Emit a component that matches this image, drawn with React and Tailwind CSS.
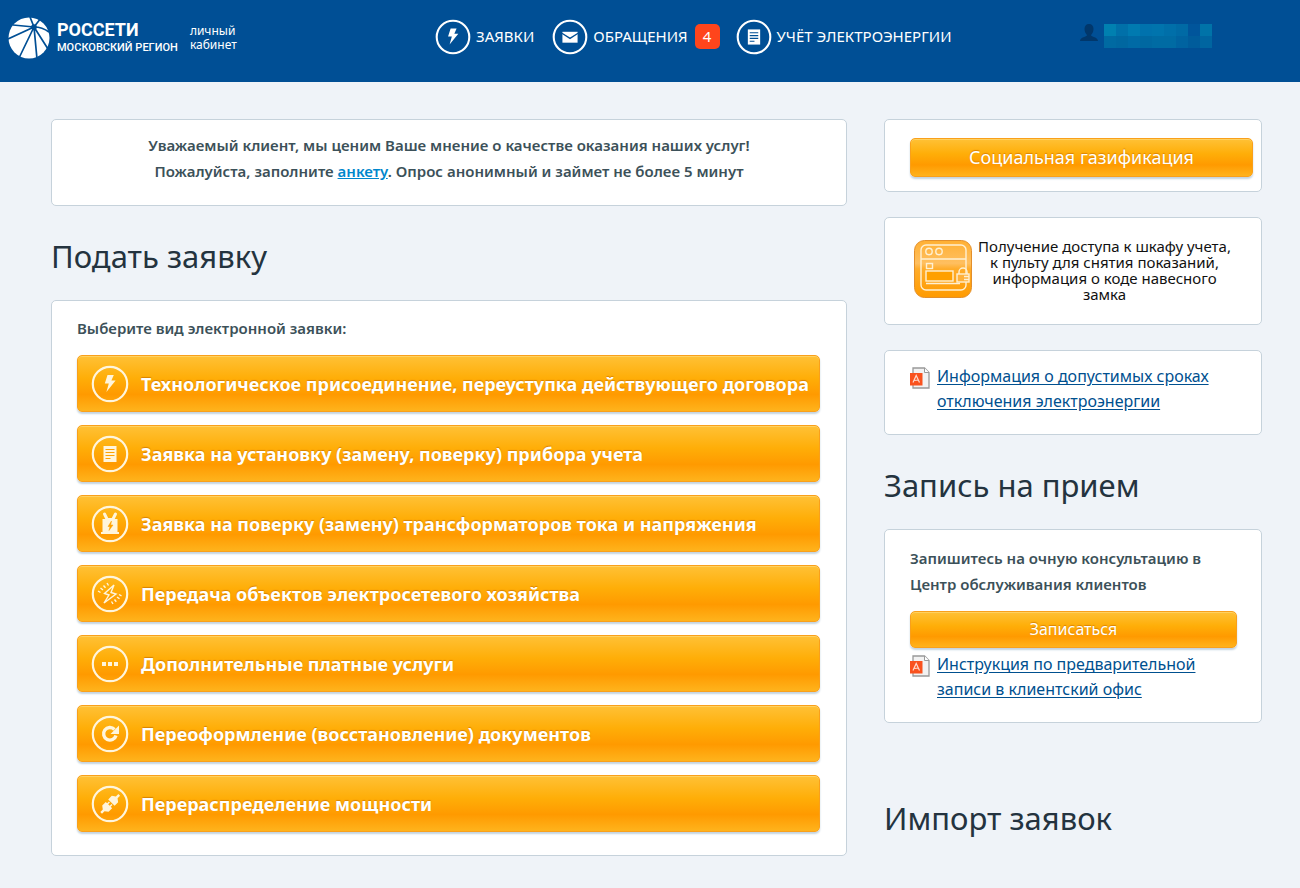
import React from 'react';

const requestTypes = [
    { id: 1, icon: 'bolt', title: 'Технологическое присоединение, переуступка действующего договора' },
    { id: 2, icon: 'sheet', title: 'Заявка на установку (замену, поверку) прибора учета' },
    { id: 3, icon: 'transformer', title: 'Заявка на поверку (замену) трансформаторов тока и напряжения' },
    { id: 4, icon: 'spark', title: 'Передача объектов электросетевого хозяйства' },
    { id: 5, icon: 'dots', title: 'Дополнительные платные услуги' },
    { id: 6, icon: 'refresh', title: 'Переоформление (восстановление) документов' },
    { id: 7, icon: 'plug', title: 'Перераспределение мощности' }
];

const glyphs = {
    bolt: <path d="M16.5 10h6.3l-2.4 5.6h4.2L15.4 27l2.4-8.4h-4z" fill="currentColor" />,
    mail: (
        <>
            <path d="M11 13.5h16V25H11z" fill="currentColor" />
            <path d="M10.5 15l8.5 5.5 8.5-5.5" fill="none" stroke="#004f95" strokeWidth="1.4" />
        </>
    ),
    sheet: (
        <>
            <path d="M12.5 11h13v16h-13z" fill="currentColor" />
            <path d="M14.5 14.5h9M14.5 17.5h9M14.5 20.5h9M14.5 23.5h5" stroke="var(--hole)" strokeWidth="1.2" />
        </>
    ),
    transformer: (
        <>
            <path d="M13.5 9l2.5 5M24.5 9L22 14" stroke="currentColor" strokeWidth="3" strokeLinecap="round" />
            <path d="M11.5 14H16l1-1h4l1 1h4.5v13H28v2H10v-2h1.5z" fill="currentColor" />
            <path d="M20.5 16L17 21.5h2l-1 4 4-5.5h-2.3z" fill="var(--hole)" stroke="var(--hole)" strokeWidth=".5" />
        </>
    ),
    spark: (
        <g fill="none" stroke="currentColor" strokeWidth="1.4">
            <path d="M23 10l-9.5 8.5L18 20l-5 8 12-9-5-1.5z" />
            <path d="M7 16l2.5 1.5M9.5 13l2.5 2M12.5 10.5l2 2.3M16 8l1.5 2.5" />
            <path d="M20.5 26.5L22 29M23.5 24.500l1.800 2.300M26 22l2.500 1.800M28 19.500l2.500 1.300" />
        </g>
    ),
    dots: <path d="M11 17h4v4h-4zM17 17h4v4h-4zM23 17h4v4h-4z" fill="currentColor" />,
    refresh: (
        <>
            <path d="M23.5 14.5a6.3 6.3 0 1 0 1.5 6" fill="none" stroke="currentColor" strokeWidth="3.4" />
            <path d="M28 10.5V19h-8.5z" fill="currentColor" />
        </>
    ),
    plug: (
        <g fill="currentColor" transform="rotate(-45 19 19)">
            <path d="M6.5 17.8H10l2.5-3.3h5v2H20v1.4h-2.5v2.200H20v1.400h-2.500v2h-5L10 20.200H6.500z" />
            <path d="M32 17.8h-3.5L26 14.5h-5v9h5l2.5-3.300H32z" />
        </g>
    )
};

function RoundIcon({ name, className }) {
    return (
        <svg viewBox="0 0 38 38" className={className} aria-hidden="true">
            <circle cx="19" cy="19" r="17.2" fill="none" stroke="currentColor" strokeWidth="2.2" />
            {glyphs[name]}
        </svg>
    );
}

function Logo() {
    return (
        <svg viewBox="0 0 42 42" className="h-[42px] w-[42px] shrink-0" aria-hidden="true">
            <circle cx="21" cy="21" r="20.5" fill="#fff" />
            <g stroke="#004f95" strokeWidth="1.7" fill="none">
                <path d="M26 10L5 8M26 10L0 22M26 10L11 41M26 10l3 32M26 10l14 22M26 10L22 0M26 10l7-9" />
                <path d="M26 10c6 0 11 2 15 5" />
                <circle cx="26" cy="10" r="2" fill="#004f95" />
            </g>
        </svg>
    );
}

function PdfIcon() {
    return (
        <svg viewBox="0 0 20 22" className="h-[22px] w-5 shrink-0" aria-hidden="true">
            <path d="M3 1h11.5L19 5.5V21H3z" fill="#f2f2f2" stroke="#999" strokeWidth="1.3" />
            <path d="M14.5 1v4.5H19" fill="#fff" stroke="#999" />
            <path d="M0 6h12.5v12.5H0z" fill="#f9521e" />
            <path d="M3 15.5l3.2-7 3.3 7M4.500 13.500l4-.5" fill="none" stroke="#ffd9cb" strokeWidth="1.2" />
        </svg>
    );
}

function CabinetIcon() {
    return (
        <svg viewBox="0 0 58 58" className="mt-0.5 h-[58px] w-[58px] shrink-0" aria-hidden="true">
            <defs>
                <linearGradient id="cabinet" x1="0" y1="0" x2="0" y2="1">
                    <stop offset="0" stopColor="#ffb033" />
                    <stop offset=".4" stopColor="#ffbf60" />
                    <stop offset=".5" stopColor="#ffac2a" />
                    <stop offset="1" stopColor="#ff9b00" />
                </linearGradient>
            </defs>
            <rect x=".5" y=".5" width="57" height="57" rx="10" fill="url(#cabinet)" stroke="#e38f2b" />
            <g fill="none" stroke="#fff0d2" strokeWidth="1.4">
                <rect x="7" y="5" width="45" height="45" rx="5" />
                <path d="M7 19h45" />
                <circle cx="15" cy="11.5" r="3.2" />
                <circle cx="25" cy="11.5" r="3.2" />
                <rect x="12.5" y="23.5" width="6" height="5" />
                <rect x="12" y="31" width="27" height="10" fill="#ffa000" />
                <path d="M12 43.5h34" />
                <path d="M45 34v-2a4 4 0 0 1 8 0v2" />
                <rect x="43" y="34" width="12" height="8" fill="#ffb13a" />
                <path d="M50 36.5h5M50 39.5h5" />
            </g>
        </svg>
    );
}

// hidden user name, drawn as rows of blocks
const maskRows = [
    '#0080b0', '#0070a9', '#007ab0', '#0072ad', '#0074ad', '#006fa9', '#006aa5', '#00559b', '#0073a8', '#004f95',
    '#006aa2', '#0067a0', '#006aa5', '#0068a1', '#006ba3', '#006ba3', '#0063a0', '#005c9b', '#0065a0', '#004f95'
];

function User() {
    return (
        <div className="flex pt-6">
            <svg viewBox="0 0 18 18" className="mr-1.5 h-[18px] w-[18px]" aria-hidden="true">
                <path d="M9 0c3 0 4.5 2 4.5 5S12 10 11 11c0 2 7 2 7 6H0c0-4 7-4 7-6C6 10 4.5 8 4.5 5S6 0 9 0z" fill="#01376b" />
            </svg>
            <div className="grid grid-cols-10">
                {maskRows.map((color, idx) => (
                    <span key={idx} className="h-3 w-3" style={{ background: color }} />
                ))}
            </div>
        </div>
    );
}

function Header() {
    return (
        <header className="flex h-[82px] items-start bg-[#004f95] pl-2 pr-[76px] text-white">
            <a href="#" className="flex h-[75px] w-[427px] items-center">
                <Logo />
                <span className="ml-[7px] flex flex-col font-['Roboto',sans-serif] font-bold">
                    <span className="text-lg leading-5">РОССЕТИ</span>
                    <span className="text-[11px] font-medium leading-4">МОСКОВСКИЙ РЕГИОН</span>
                </span>
                <span className="ml-3 text-xs leading-[14px]">личный<br />кабинет</span>
            </a>
            <nav className="flex h-[73px] flex-1 items-center text-[15px]">
                <a href="#" className="flex items-center gap-[5px]">
                    <RoundIcon name="bolt" className="h-9 w-9" />ЗАЯВКИ
                </a>
                <a href="#" className="ml-[18px] flex items-center gap-[5px]">
                    <RoundIcon name="mail" className="h-9 w-9" />ОБРАЩЕНИЯ
                    <span className="ml-0.5 flex h-[25px] w-[25px] items-center justify-center rounded-[5px] bg-[#ff451c]">4</span>
                </a>
                <a href="#" className="ml-4 flex items-center gap-[5px]">
                    <RoundIcon name="sheet" className="h-9 w-9 [--hole:#004f95]" />УЧЁТ ЭЛЕКТРОЭНЕРГИИ
                </a>
            </nav>
            <User />
        </header>
    );
}

function Card({ className, children }) {
    return <section className={`rounded-[5px] border border-[#c6d2db] bg-white ${className}`}>{children}</section>;
}

const heading = 'pb-[21px] pt-[27px] text-[31px] leading-[46px] text-[#24333f]';

const orange =
    'rounded-[5px] border border-[#f9a01b] text-white shadow-[0_2px_2px_#c3d3df,inset_0_1px_0_#ffd160] bg-[linear-gradient(#ffc136,#ffae08_40%,#ff9a00_70%,#ffb31c)] [text-shadow:0_-1px_1px_#d98200] cursor-pointer hover:brightness-105';

function PdfLink({ children }) {
    return (
        <a href="#" className="flex gap-[7px] text-base leading-[25px] text-[#00508f]">
            <span className="pt-[3px]"><PdfIcon /></span>
            <span className="underline underline-offset-2">{children}</span>
        </a>
    );
}

export default function App() {
    return (
        <div className="min-h-screen bg-[#eff3f8] font-['Noto_Sans',sans-serif] text-[#3c5159]">
            <Header />
            <main className="grid grid-cols-[minmax(0,1fr)_378px] gap-[37px] pb-8 pl-[51px] pr-[38px] pt-[37px]">
                <div>
                    <Card className="px-6 pb-[21px] pt-3 text-center text-[15px] font-semibold leading-[26px]">
                        <p>Уважаемый клиент, мы ценим Ваше мнение о качестве оказания наших услуг!</p>
                        <p>
                            Пожалуйста, заполните <a href="#" className="text-[#0087cc] underline">анкету</a>. Опрос анонимный и займет не более 5 минут
                        </p>
                    </Card>
                    <h1 className={heading}>Подать заявку</h1>
                    <Card className="pb-[23px] pl-[25px] pr-[26px] pt-[15px]">
                        <p className="text-[15px] font-semibold leading-6">Выберите вид электронной заявки:</p>
                        <div className="mt-[15px] flex flex-col gap-[13px]">
                            {requestTypes.map((item) => (
                                <button
                                    key={item.id}
                                    className={`${orange} flex h-[57px] items-center gap-3 pl-[13px] text-left text-lg font-bold`}
                                >
                                    <RoundIcon name={item.icon} className="h-[38px] w-[38px] shrink-0 text-[#fff5dc] [--hole:#ffa200]" />
                                    {item.title}
                                </button>
                            ))}
                        </div>
                    </Card>
                </div>

                <aside>
                    <Card className="pb-[14px] pl-[25px] pr-2 pt-[18px]">
                        <button className={`${orange} h-[39px] w-full pb-0.5 text-lg`}>Социальная газификация</button>
                    </Card>
                    <Card className="mt-[25px] pb-[22px] pl-[29px] pr-6 pt-5">
                        <a href="#" className="flex items-start text-center text-[15px] leading-4 text-[#111]">
                            <CabinetIcon />
                            <span className="flex-1">
                                Получение доступа к шкафу учета,<br />к пульту для снятия показаний, информация о коде навесного замка
                            </span>
                        </a>
                    </Card>
                    <Card className="mt-[25px] px-[25px] pb-5 pt-[13px]">
                        <PdfLink>Информация о допустимых сроках отключения электроэнергии</PdfLink>
                    </Card>
                    <h2 className={heading}>Запись на прием</h2>
                    <Card className="pb-5 pl-[25px] pr-6 pt-[15px]">
                        <p className="text-[15px] font-semibold leading-[26px]">Запишитесь на очную консультацию в Центр обслуживания клиентов</p>
                        <button className={`${orange} mb-1 mt-[14px] h-[37px] w-full pb-0.5 text-base`}>Записаться</button>
                        <PdfLink>Инструкция по предварительной записи в клиентский офис</PdfLink>
                    </Card>
                    <h2 className={`${heading} mt-[45px]`}>Импорт заявок</h2>
                </aside>
            </main>
        </div>
    );
}
